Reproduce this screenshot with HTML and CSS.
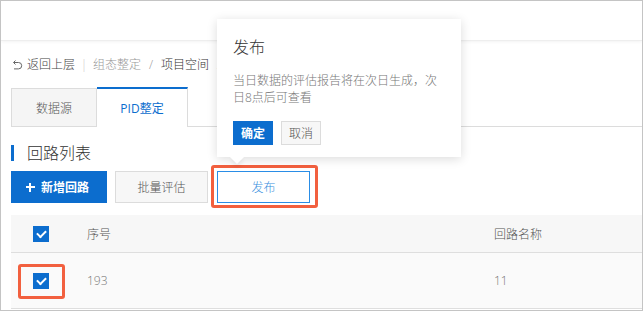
FILE: index.html
```html
<!DOCTYPE html>
<html lang="zh-CN">
<head>
<meta charset="utf-8">
<title>回路列表</title>
<link rel="stylesheet" href="styles.css">
</head>
<body>
<div class="frame">
  <div class="topbar"></div>
  <div class="main">
    <div class="breadcrumb">
      <span class="back">
        <svg class="back-icon" width="11" height="11" viewBox="0 0 11 11"><path d="M3.5 1.5 L1.5 3.5 L3.5 5.5 M1.8 3.5 H6.5 A3.2 3.2 0 0 1 6.5 9.9 H2" fill="none" stroke="#666" stroke-width="1"/></svg>
        <span>返回上层</span>
      </span>
      <span class="bar">|</span>
      <span class="crumb muted">组态整定</span>
      <span class="slash">/</span>
      <span class="crumb">项目空间</span>
      <span class="slash">/</span>
    </div>
    <div class="tabs">
      <div class="tab">数据源</div>
      <div class="tab active">PID整定</div>
      <div class="tab-rest"></div>
    </div>
    <div class="section-title">回路列表</div>
    <div class="toolbar">
      <button class="btn primary"><span class="plus"></span>新增回路</button>
      <button class="btn plain">批量评估</button>
      <button class="btn outline highlight">发布</button>
    </div>
    <div class="table">
      <div class="row head">
        <div class="cell check"><span class="checkbox"></span></div>
        <div class="cell">序号</div>
        <div class="cell">回路名称</div>
      </div>
      <div class="row body">
        <div class="cell check"><span class="checkbox highlight-small"></span></div>
        <div class="cell">193</div>
        <div class="cell">11</div>
      </div>
    </div>
  </div>
  <div class="popover">
    <div class="pop-title">发布</div>
    <div class="pop-text">当日数据的评估报告将在次日生成，次日8点后可查看</div>
    <div class="pop-actions">
      <button class="pbtn ok">确定</button>
      <button class="pbtn cancel">取消</button>
    </div>
  </div>
</div>
</body>
</html>
```
FILE: styles.css
```css
* { box-sizing: border-box; }
html, body { margin: 0; padding: 0; background: #fff; }
body {
  font-family: "Open Sans", "Noto Sans CJK SC", sans-serif;
  font-size: 12px;
  font-weight: 300;
  color: #333;
}
.frame {
  position: relative;
  width: 643px;
  height: 311px;
  border: 1px solid #c4c4c4;
  overflow: hidden;
  background: #fff;
}
.topbar {
  height: 40px;
  border-bottom: 1px solid #eeeeee;
  box-shadow: 0 1px 3px rgba(0,0,0,0.05);
}
.main {
  padding-left: 10px;
}
.breadcrumb {
  height: 46px;
  display: flex;
  align-items: center;
  padding-left: 1px;
  color: #333;
  font-size: 12px;
  white-space: nowrap;
}
.back { display: flex; align-items: center; color: #444; }
.back-icon { margin-right: 4px; flex: none; }
.bar { color: #ccc; width: 18px; text-align: center; flex: none; }
.muted { color: #999; }
.slash { color: #999; width: 20px; text-align: center; flex: none; }
.tabs {
  display: flex;
  height: 40px;
}
.tab {
  width: 86px;
  display: flex;
  align-items: center;
  justify-content: center;
  background: #f5f5f5;
  border: 1px solid #dcdcdc;
  color: #555;
  margin-top: 1px;
  height: 39px;
}
.tab.active {
  width: 91px;
  margin-top: 0;
  height: 40px;
  background: #fff;
  border-left: none;
  border-top: 2px solid #0c6dce;
  border-bottom: none;
  color: #0c6dce;
  font-weight: 400;
}
.tab-rest {
  flex: 1;
  border-bottom: 1px solid #dcdcdc;
}
.section-title {
  margin-top: 18px;
  height: 16px;
  line-height: 16px;
  font-size: 16px;
  color: #333;
  border-left: 3px solid #0c6dce;
  padding-left: 13px;
}
.toolbar {
  margin-top: 10px;
  display: flex;
  height: 32px;
}
.btn {
  font-family: inherit;
  font-size: 12px;
  font-weight: 300;
  height: 32px;
  width: 93px;
  display: flex;
  align-items: center;
  justify-content: center;
  padding: 0;
  cursor: pointer;
  position: relative;
}
.btn.primary {
  width: 96px;
  background: #0c6dce;
  border: none;
  color: #fff;
  font-weight: bold;
}
.plus {
  position: relative;
  width: 9px;
  height: 9px;
  margin-right: 6px;
  margin-left: -3px;
}
.plus::before, .plus::after {
  content: "";
  position: absolute;
  background: #fff;
}
.plus::before { left: 0; right: 0; top: 3.5px; height: 2px; }
.plus::after { top: 0; bottom: 0; left: 3.5px; width: 2px; }
.btn.plain {
  margin-left: 8px;
  background: #f7f7f7;
  border: 1px solid #dcdcdc;
  color: #555;
}
.btn.outline {
  margin-left: 9px;
  background: #fff;
  border: 1px solid #2a8de6;
  color: #3a8fde;
}
.highlight::after {
  content: "";
  position: absolute;
  left: -7px;
  right: -9px;
  top: -7px;
  bottom: -6px;
  border: 3px solid #f2603f;
  border-radius: 3px;
}
.table {
  margin-top: 12px;
}
.row {
  display: grid;
  grid-template-columns: 76px 407px 1fr;
  align-items: center;
  border-bottom: 1px solid #dedede;
}
.row.head { height: 38px; background: #f7f7f7; color: #555; }
.row.body { height: 56px; background: #fafafa; color: #777; }
.cell.check { padding-left: 22px; display: flex; align-items: center; }
.checkbox {
  position: relative;
  width: 16px;
  height: 16px;
  background: #0c6dce;
  display: block;
}
.checkbox::before {
  content: "";
  position: absolute;
  left: 4px;
  top: 4px;
  width: 7px;
  height: 4px;
  border-left: 2px solid #fff;
  border-bottom: 2px solid #fff;
  transform: rotate(-45deg);
  transform-origin: center;
}
.highlight-small::after {
  content: "";
  position: absolute;
  left: -15px;
  right: -16px;
  top: -9px;
  bottom: -10px;
  border: 3px solid #f2603f;
  border-radius: 3px;
}
.popover {
  position: absolute;
  left: 216px;
  top: 18px;
  width: 244px;
  background: #fff;
  padding: 16px 16px 12px;
  box-shadow: 0 2px 10px rgba(0,0,0,0.14);
}
.popover::after {
  content: "";
  position: absolute;
  left: 15px;
  bottom: -5px;
  width: 10px;
  height: 10px;
  background: #fff;
  transform: rotate(45deg);
  box-shadow: 3px 3px 4px rgba(0,0,0,0.06);
}
.pop-title {
  font-size: 16px;
  line-height: 24px;
  color: #333;
}
.pop-text {
  margin-top: 13px;
  font-size: 12px;
  line-height: 17px;
  color: #777;
}
.pop-actions {
  margin-top: 15px;
  display: flex;
  gap: 8px;
}
.pbtn {
  font-family: inherit;
  font-size: 12px;
  font-weight: 300;
  width: 40px;
  height: 24px;
  padding: 0;
  display: flex;
  align-items: center;
  justify-content: center;
}
.pbtn.ok {
  background: #0c6dce;
  border: none;
  color: #fff;
  font-weight: bold;
}
.pbtn.cancel {
  background: #f7f7f7;
  border: 1px solid #dcdcdc;
  color: #555;
}
```
